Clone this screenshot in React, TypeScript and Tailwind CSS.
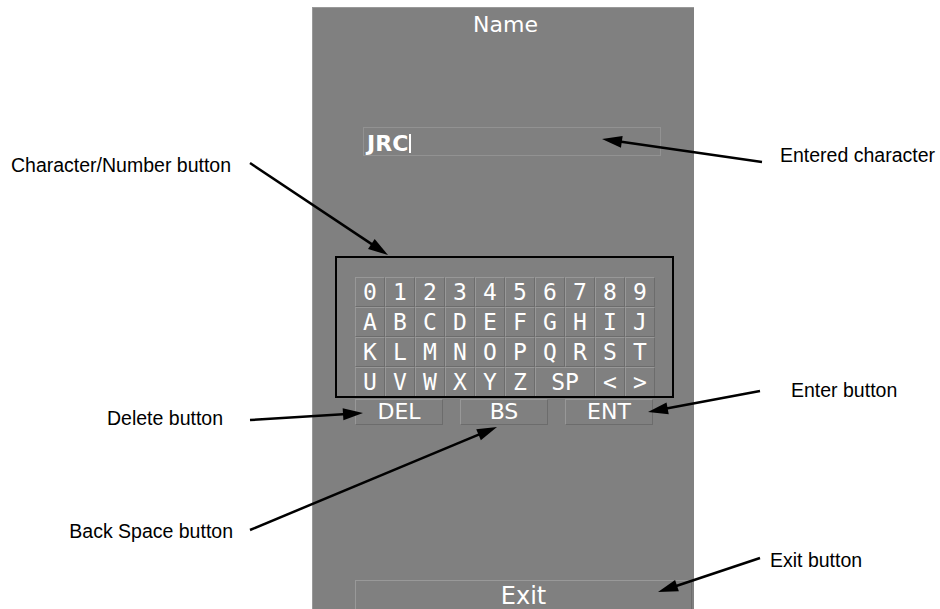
import React from "react";

const ROWS = [
  ["0", "1", "2", "3", "4", "5", "6", "7", "8", "9"],
  ["A", "B", "C", "D", "E", "F", "G", "H", "I", "J"],
  ["K", "L", "M", "N", "O", "P", "Q", "R", "S", "T"],
  ["U", "V", "W", "X", "Y", "Z", "SP", "<", ">"],
];

const LABELS = [
  { text: "Character/Number button", className: "left-[11px] top-[155px]" },
  { text: "Entered character", className: "left-[780px] top-[145px]" },
  { text: "Delete button", className: "left-[107px] top-[408px]" },
  { text: "Enter button", className: "left-[791px] top-[380px]" },
  { text: "Back Space button", className: "right-[707px] top-[521px]" },
  { text: "Exit button", className: "left-[770px] top-[550px]" },
];

// [tailX, tailY, tipX, tipY]
const ARROWS: [number, number, number, number][] = [
  [250, 163, 388, 255],
  [762, 162, 602, 139],
  [250, 420, 363, 413],
  [760, 391, 648, 412],
  [250, 530, 497, 427],
  [760, 558, 658, 592],
];

function headPoints(x1: number, y1: number, x2: number, y2: number) {
  const len = Math.hypot(x2 - x1, y2 - y1);
  const ux = (x2 - x1) / len;
  const uy = (y2 - y1) / len;
  const bx = x2 - ux * 20;
  const by = y2 - uy * 20;
  const px = -uy * 6;
  const py = ux * 6;
  return `${x2},${y2} ${bx + px},${by + py} ${bx - px},${by - py}`;
}

function Key({ label, wide }: { label: string; wide?: boolean }) {
  return (
    <div
      className={`h-[30px] border-t border-l border-t-[#989898] border-l-[#989898] border-r border-b border-r-[#6c6c6c] border-b-[#6c6c6c] text-center text-white text-[23px] leading-[28px] ${
        wide ? "col-span-2" : ""
      }`}
    >
      {label}
    </div>
  );
}

function PanelButton({ label }: { label: string }) {
  return (
    <div className="w-[88px] h-[26px] border-t border-l border-[#989898] border-r border-b border-r-[#6c6c6c] border-b-[#6c6c6c] text-center text-white text-[22px] leading-[23px]">
      {label}
    </div>
  );
}

export default function App() {
  return (
    <div className="relative w-[940px] h-[609px] overflow-hidden bg-white font-['DejaVu_Sans',sans-serif]">
      <div className="pl-[312px] pt-[7px]">
        <div className="w-[382px] h-[602px] bg-[#808080] border-t border-l border-[#999999] flex flex-col">
          {/* Title */}
          <div className="shrink-0 mt-[4px] pl-[4px] text-center text-white text-[22px] leading-[26px]">
            Name
          </div>

          {/* Entered text */}
          <div className="shrink-0 ml-[50px] mt-[89px] w-[298px] h-[29px] border border-[#929292] pl-[3px] pt-[5px] flex items-start text-white text-[22px] leading-[22px] font-bold">
            <span>JRC</span>
            <span className="ml-[1px] mt-[1px] w-[2px] h-[19px] bg-white" />
          </div>

          {/* Character / number keys */}
          <div className="shrink-0 ml-[22px] mt-[100px] w-[339px] h-[142px] border-2 border-black pl-[18px] pt-[19px] overflow-hidden">
            <div className="grid grid-cols-[repeat(10,30px)] font-['DejaVu_Sans_Mono',monospace]">
              {ROWS.flatMap((row, r) =>
                row.map((k) => <Key key={`${r}-${k}`} label={k} wide={k === "SP"} />)
              )}
            </div>
          </div>

          {/* DEL / BS / ENT */}
          <div className="shrink-0 ml-[42px] mt-[1px] flex gap-[17px]">
            <PanelButton label="DEL" />
            <PanelButton label="BS" />
            <PanelButton label="ENT" />
          </div>

          {/* Exit */}
          <div className="shrink-0 ml-[42px] mt-[155px] w-[337px] h-[30px] border-t border-l border-[#999999] border-r border-r-[#6c6c6c] text-center text-white text-[24px] leading-[30px]">
            Exit
          </div>
        </div>
      </div>

      {/* Annotations */}
      {LABELS.map((l) => (
        <div
          key={l.text}
          className={`absolute whitespace-nowrap text-black text-[19.5px] leading-[20px] font-['Liberation_Sans',Arial,sans-serif] ${l.className}`}
        >
          {l.text}
        </div>
      ))}
      <svg className="absolute inset-0 pointer-events-none" width="940" height="609">
        {ARROWS.map(([x1, y1, x2, y2], i) => {
          const len = Math.hypot(x2 - x1, y2 - y1);
          const ex = x2 - ((x2 - x1) / len) * 16;
          const ey = y2 - ((y2 - y1) / len) * 16;
          return (
            <g key={i}>
              <line x1={x1} y1={y1} x2={ex} y2={ey} stroke="black" strokeWidth={2.5} />
              <polygon points={headPoints(x1, y1, x2, y2)} fill="black" />
            </g>
          );
        })}
      </svg>
    </div>
  );
}
